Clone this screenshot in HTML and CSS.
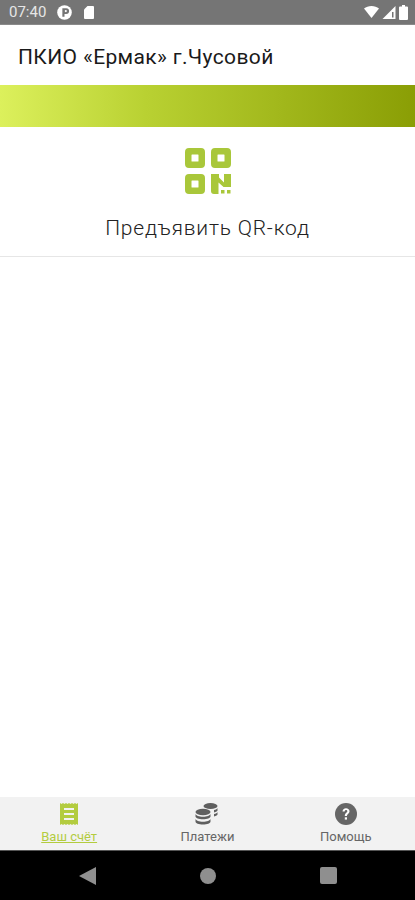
FILE: index.html
```html
<!DOCTYPE html>
<html>
  <head>
    <meta charset="UTF-8">
    <title>Ермак</title>
    <link rel="stylesheet" href="styles.css">
  </head>
  <body>
    <div class="status-bar">
      <div class="status-left">
        <span class="clock">07:40</span>
        <svg class="status-icon" width="15" height="15" viewBox="0 0 14 14">
          <circle cx="7" cy="7" r="6.800" fill="#fff"/>
          <path d="M5 3h3.600a2.700 2.700 0 0 1 0 5.400H7V11H5z" fill="#757575"/>
          <circle cx="8.200" cy="5.700" r="1" fill="#fff"/>
        </svg>
        <svg class="status-icon" width="12" height="14" viewBox="0 0 12 14">
          <path d="M4.500 1H10a1 1 0 0 1 1 1v11a1 1 0 0 1-1 1H2a1 1 0 0 1-1-1V4.500z" fill="#fff"/>
        </svg>
      </div>
      <div class="status-right">
        <svg width="15" height="12" viewBox="0 0 15 12">
          <path d="M0 2.600C2 .9 4.600 0 7.500 0s5.500.9 7.500 2.600L7.500 12z" fill="#fff"/>
        </svg>
        <svg width="14" height="13" viewBox="0 0 13 13">
          <path d="M13 0v13H0z" fill="#fff"/>
          <path d="M9.500 6h1.500v5.500H9.500z" fill="#757575"/>
        </svg>
        <svg width="9" height="15" viewBox="0 0 9 15">
          <path d="M3 0h3v1.500h2a1 1 0 0 1 1 1V14a1 1 0 0 1-1 1H1a1 1 0 0 1-1-1V2.500a1 1 0 0 1 1-1h2z" fill="#fff"/>
        </svg>
      </div>
    </div>

    <h1 class="title">ПКИО «Ермак» г.Чусовой</h1>
    <div class="gradient-bar"></div>

    <div class="qr-block">
      <svg class="qr-icon" width="46" height="46" viewBox="0 0 46 46">
        <path fill-rule="evenodd" fill="#a9c73a" d="M4 0h12a4 4 0 0 1 4 4v12a4 4 0 0 1-4 4H4a4 4 0 0 1-4-4V4a4 4 0 0 1 4-4zM7 6.500a.5.5 0 0 0-.5.5v6a.5.5 0 0 0 .5.5h6a.5.5 0 0 0 .5-.5V7a.5.5 0 0 0-.5-.5z"/>
        <path fill-rule="evenodd" fill="#a9c73a" d="M30 0h12a4 4 0 0 1 4 4v12a4 4 0 0 1-4 4H30a4 4 0 0 1-4-4V4a4 4 0 0 1 4-4zM33 6.500a.5.5 0 0 0-.5.5v6a.5.5 0 0 0 .5.5h6a.5.5 0 0 0 .5-.5V7a.5.5 0 0 0-.5-.5z"/>
        <path fill-rule="evenodd" fill="#a9c73a" d="M4 26h12a4 4 0 0 1 4 4v12a4 4 0 0 1-4 4H4a4 4 0 0 1-4-4V30a4 4 0 0 1 4-4zM7 32.500a.5.5 0 0 0-.5.5v6a.5.5 0 0 0 .5.5h6a.5.5 0 0 0 .5-.5v-6a.5.5 0 0 0-.5-.5z"/>
        <path fill="#a9c73a" d="M26 26h8v3.500l5 5V26h7v13h-7.500l-5-4.500V46h-4.500a3 3 0 0 1-3-3z"/>
        <rect x="36" y="42" width="3.500" height="3.500" fill="#a9c73a"/>
        <rect x="42" y="42" width="3.500" height="3.500" fill="#a9c73a"/>
      </svg>
      <div class="qr-label">Предъявить QR-код</div>
    </div>

    <div class="content"></div>

    <div class="tabs">
      <div class="tab tab-active">
        <svg width="18" height="22" viewBox="0 0 18 22">
          <path fill-rule="evenodd" fill="#b3cc3f" d="M0 0l1.500 1L3 0l1.500 1L6 0l1.500 1L9 0l1.500 1L12 0l1.500 1L15 0l1.500 1L18 0v22l-1.500-1-1.500 1-1.500-1-1.500 1-1.500-1L9 22l-1.500-1L6 22l-1.500-1L3 22l-1.500-1L0 22zM4 5v2h10V5zM4 10v2h10v-2zM4 15v2h10v-2z"/>
        </svg>
        <span class="tab-label">Ваш счёт</span>
      </div>
      <div class="tab">
        <svg width="24" height="22" viewBox="0 0 24 22">
          <ellipse cx="15.500" cy="3" rx="7" ry="3" fill="#5f5f5f"/>
          <path d="M19 7c1.800-.4 3.200-1.100 3.500-2v2.500c0 .7-1.300 1.500-3.500 1.900zM19 11c1.800-.4 3.200-1.100 3.500-2v2.500c0 .7-1.300 1.500-3.500 1.900z" fill="#5f5f5f"/>
          <ellipse cx="8" cy="9" rx="7.500" ry="3.200" fill="#5f5f5f"/>
          <path d="M.5 11c.5 1.500 3.500 2.800 7.500 2.800s7-1.300 7.500-2.800v2.500c0 1.500-3.300 2.800-7.500 2.800S.5 15 .5 13.500z" fill="#5f5f5f"/>
          <path d="M.5 16c.5 1.500 3.500 2.800 7.500 2.800s7-1.300 7.500-2.800v2.500c0 1.800-3.300 3-7.500 3S.5 20.300.5 18.500z" fill="#5f5f5f"/>
        </svg>
        <span class="tab-label">Платежи</span>
      </div>
      <div class="tab">
        <svg width="22" height="22" viewBox="0 0 22 22">
          <circle cx="11" cy="11" r="11" fill="#666"/>
          <path d="M7.500 8.500C7.500 6.500 9 5.200 11 5.200s3.500 1.300 3.500 3.100c0 2.500-2.500 2.500-2.500 4.700h-2.200c0-3.100 2.500-3.100 2.500-4.700 0-.7-.6-1.200-1.300-1.200s-1.300.6-1.300 1.400z" fill="#fff"/>
          <rect x="9.800" y="14.300" width="2.200" height="2.300" fill="#fff"/>
        </svg>
        <span class="tab-label">Помощь</span>
      </div>
    </div>

    <div class="nav-bar">
      <svg width="17" height="18" viewBox="0 0 17 18"><path d="M17 0v18L0 9z" fill="#8f8f8f"/></svg>
      <div class="nav-home"></div>
      <div class="nav-recent"></div>
    </div>
  </body>
</html>
```

FILE: styles.css
```css
* {
  box-sizing: border-box;
}

html,
body {
  height: 100%;
}

body {
  margin: 0;
  padding: 0;
  display: flex;
  flex-direction: column;
  height: 900px;
  overflow: hidden;
  background-color: #fff;
  font-family: Roboto, "Liberation Sans", sans-serif;
}

.status-bar {
  display: flex;
  justify-content: space-between;
  align-items: center;
  height: 25px;
  padding: 0 7px 0 9px;
  background-color: #757575;
  border-bottom: 1px solid #8a8a8a;
}

.status-left,
.status-right {
  display: flex;
  align-items: center;
}

.status-left {
  gap: 11px;
}

.status-right {
  gap: 3px;
}

.clock {
  font-size: 15px;
  color: #e6e6e6;
}

.title {
  margin: 0;
  height: 60px;
  padding-left: 18px;
  line-height: 65px;
  font-size: 21px;
  letter-spacing: 0.36px;
  font-weight: 400;
  color: #1a1a1a;
}

.gradient-bar {
  height: 42px;
  background: linear-gradient(to right, #dcf05c, #b9d132 35%, #8a9e05);
}

.qr-block {
  display: flex;
  flex-direction: column;
  align-items: center;
  height: 130px;
  padding-top: 21px;
  border-bottom: 1px solid #e6e6e6;
}

.qr-label {
  margin-top: 20px;
  font-size: 21px;
  font-weight: 300;
  line-height: 28px;
  letter-spacing: 0.8px;
  color: #222;
}

.content {
  flex: 1;
}

.tabs {
  display: flex;
  height: 53px;
  background-color: #f2f2f2;
}

.tab {
  flex: 1;
  display: flex;
  flex-direction: column;
  align-items: center;
  padding-top: 6px;
}

.tab-label {
  margin-top: 4px;
  font-size: 13px;
  line-height: 16px;
  color: #666;
}

.tab-active .tab-label {
  color: #b3cc3f;
  text-decoration: underline;
}

.nav-bar {
  display: flex;
  justify-content: center;
  align-items: center;
  gap: 104px;
  height: 50px;
  background-color: #000;
  border-top: 1px solid #555;
}

.nav-home {
  width: 16px;
  height: 16px;
  border-radius: 50%;
  background-color: #8f8f8f;
}

.nav-recent {
  width: 17px;
  height: 17px;
  border-radius: 2px;
  background-color: #8f8f8f;
}
```
